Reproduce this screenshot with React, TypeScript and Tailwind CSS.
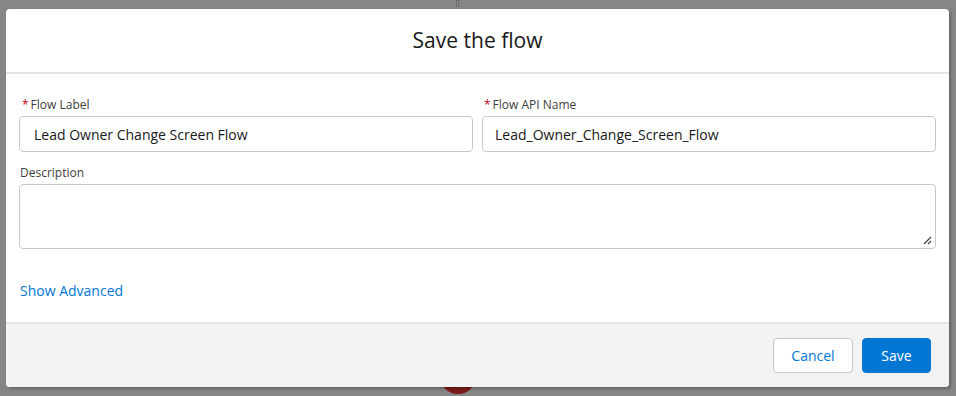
export default function App() {
  return (
    <div
      className="relative h-[396px] w-[956px] overflow-hidden bg-[#868686] pt-[9px] pl-[6px]"
      style={{ fontFamily: '"Open Sans", "Noto Sans", sans-serif' }}
    >
      {/* grip behind overlay */}
      <div className="absolute left-[456px] top-0 grid grid-cols-2 gap-[1px]">
        {Array.from({ length: 8 }).map((_, i) => (
          <div key={i} className="h-[1px] w-[1px] bg-[#5a5a5a]" />
        ))}
      </div>
      {/* node peeking below modal */}
      <div className="absolute left-[441px] top-[362px] h-[32px] w-[34px] rounded-full bg-[#7d1d1a]" />

      <div className="relative flex h-[378px] w-[943px] flex-col overflow-hidden rounded-[4px] bg-white shadow-[2px_2px_3px_rgba(0,0,0,0.25)]">
        {/* Header */}
        <div className="flex h-[65px] items-center justify-center border-b-2 border-[#e5e5e5]">
          <h2 className="text-[21px] leading-none text-[#181818]">Save the flow</h2>
        </div>

        {/* Body */}
        <div className="flex-1 px-[13px] pt-[22px]">
          <div className="grid grid-cols-2 gap-x-[9px]">
            <div>
              <label className="mb-[2px] flex items-center text-[12px] leading-[18px] text-[#3e3e3c]">
                <span className="mr-[2px] pl-[3px] text-[#ba0517]">*</span>Flow Label
              </label>
              <div className="flex h-[36px] items-center rounded-[4px] border border-[#c9c9c9] px-[14px] text-[14px] text-[#181818]">
                Lead Owner Change Screen Flow
              </div>
            </div>
            <div>
              <label className="mb-[2px] flex items-center text-[12px] leading-[18px] text-[#3e3e3c]">
                <span className="mr-[2px] pl-[2px] text-[#ba0517]">*</span>Flow API Name
              </label>
              <div className="flex h-[36px] items-center rounded-[4px] border border-[#c9c9c9] px-[12px] text-[14px] text-[#181818]">
                Lead_Owner_Change_Screen_Flow
              </div>
            </div>
          </div>

          <label className="mt-[12px] block pl-[1px] text-[12px] leading-[18px] text-[#3e3e3c]">Description</label>
          <div className="relative mt-[2px] h-[65px] rounded-[4px] border border-[#c9c9c9]">
            <svg className="absolute bottom-[3px] right-[3px]" width="10" height="10" viewBox="0 0 10 10">
              <path d="M9 2 L2 9 M9 6 L6 9" stroke="#444" strokeWidth="1.2" fill="none" />
            </svg>
          </div>

          <div className="mt-[31px] pl-[1px] text-[14px] text-[#0176d3]">Show Advanced</div>
        </div>

        {/* Footer */}
        <div className="flex h-[65px] items-center justify-end gap-[9px] border-t-2 border-[#e5e5e5] bg-[#f3f3f3] pr-[18px]">
          <button className="h-[35px] w-[80px] rounded-[4px] border border-[#c9c9c9] bg-white text-[14px] text-[#0176d3]">
            Cancel
          </button>
          <button className="h-[35px] w-[69px] rounded-[4px] border border-[#0176d3] bg-[#0176d3] text-[14px] text-white">
            Save
          </button>
        </div>
      </div>
    </div>
  );
}
